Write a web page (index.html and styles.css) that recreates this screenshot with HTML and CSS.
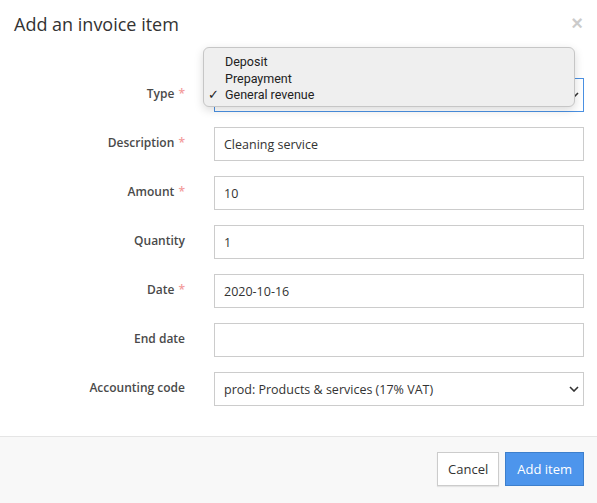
FILE: index.html
```html
<!DOCTYPE html>
<html lang="en">
<head>
    <meta charset="UTF-8">
    <meta name="viewport" content="width=device-width, initial-scale=1.0">
    <title>Add an invoice item</title>
    <link rel="stylesheet" href="styles.css">
</head>
<body>
    <div class="modal">
        <div class="modal-header">
            <h4 class="modal-title">Add an invoice item</h4>
            <button class="close" type="button">&times;</button>
        </div>

        <form class="modal-body">
            <div class="form-row">
                <label for="item-type">Type <span class="req">*</span></label>
                <div class="field">
                    <select id="item-type" class="form-control focused">
                        <option>Deposit</option>
                        <option>Prepayment</option>
                        <option selected>General revenue</option>
                    </select>
                    <ul class="select-menu">
                        <li>Deposit</li>
                        <li>Prepayment</li>
                        <li class="checked">General revenue</li>
                    </ul>
                </div>
            </div>
            <div class="form-row">
                <label for="item-description">Description <span class="req">*</span></label>
                <div class="field">
                    <input type="text" id="item-description" class="form-control" value="Cleaning service">
                </div>
            </div>
            <div class="form-row">
                <label for="item-amount">Amount <span class="req">*</span></label>
                <div class="field">
                    <input type="text" id="item-amount" class="form-control" value="10">
                </div>
            </div>
            <div class="form-row">
                <label for="item-quantity">Quantity</label>
                <div class="field">
                    <input type="text" id="item-quantity" class="form-control" value="1">
                </div>
            </div>
            <div class="form-row">
                <label for="item-date">Date <span class="req">*</span></label>
                <div class="field">
                    <input type="text" id="item-date" class="form-control" value="2020-10-16">
                </div>
            </div>
            <div class="form-row">
                <label for="item-end-date">End date</label>
                <div class="field">
                    <input type="text" id="item-end-date" class="form-control" value="">
                </div>
            </div>
            <div class="form-row">
                <label for="item-code">Accounting code</label>
                <div class="field">
                    <select id="item-code" class="form-control">
                        <option>prod: Products &amp; services (17% VAT)</option>
                    </select>
                </div>
            </div>
        </form>

        <div class="modal-footer">
            <button type="button" class="btn btn-default">Cancel</button>
            <button type="button" class="btn btn-primary">Add item</button>
        </div>
    </div>
</body>
</html>
```

FILE: styles.css
```css
body {
    margin: 0;
    font-family: "Open Sans", Arial, sans-serif;
    color: #333;
    background-color: #fff;
}
.modal {
    width: 597px;
    height: 503px;
    display: flex;
    flex-direction: column;
}
.modal-header {
    display: flex;
    justify-content: space-between;
    align-items: flex-start;
    padding: 12px 14px 0 14px;
    height: 51px;
}
.modal-title {
    margin: 0;
    font-size: 18px;
    font-weight: 400;
    line-height: 25px;
    color: #333;
}
.close {
    background: none;
    border: none;
    padding: 0;
    margin-top: 1px;
    font-family: Arial, sans-serif;
    font-size: 20px;
    font-weight: bold;
    line-height: 20px;
    color: #000;
    opacity: 0.2;
    cursor: pointer;
}
.modal-body {
    margin: 0;
    padding: 15px 13px 30px 0;
    display: flex;
    flex-direction: column;
    gap: 15px;
}
.form-row {
    display: grid;
    grid-template-columns: 185px 1fr;
    column-gap: 29px;
    align-items: center;
}
.form-row label {
    text-align: right;
    font-size: 12px;
    font-weight: 600;
    color: #4a4a4a;
    margin-top: -3px;
}
.req {
    color: #f39a9a;
    margin-left: 1px;
}
.field {
    position: relative;
}
.form-control {
    display: block;
    width: 100%;
    height: 34px;
    box-sizing: border-box;
    padding: 0 9px;
    border: 1px solid #ccc;
    border-radius: 0;
    font-family: "Open Sans", Arial, sans-serif;
    font-size: 12.5px;
    color: #333;
    background-color: #fff;
    outline: none;
}
select.form-control {
    appearance: none;
    -webkit-appearance: none;
    background-image: url("data:image/svg+xml;utf8,<svg xmlns='http://www.w3.org/2000/svg' width='10' height='6' viewBox='0 0 10 6'><path d='M1 1l4 4 4-4' fill='none' stroke='%23333' stroke-width='1.6'/></svg>");
    background-repeat: no-repeat;
    background-position: right 4px center;
    padding-right: 24px;
}
.form-control.focused {
    border-color: #4a90e2;
}
.select-menu {
    position: absolute;
    left: -11px;
    top: -31px;
    width: 372px;
    height: 60px;
    box-sizing: border-box;
    margin: 0;
    padding: 6px 0 0 0;
    list-style: none;
    background-color: #efefef;
    border: 1px solid #c6c6c6;
    border-radius: 6px;
    box-shadow: 0 3px 10px rgba(0, 0, 0, 0.15);
    font-family: Roboto, "Liberation Sans", sans-serif;
    font-size: 12.5px;
    color: #222;
}
.select-menu li {
    position: relative;
    height: 16.5px;
    line-height: 16px;
    padding-left: 21px;
}
.select-menu li.checked::before {
    content: "\2713";
    position: absolute;
    left: 4px;
    top: 0;
    font-family: "DejaVu Sans", sans-serif;
    font-size: 13px;
    font-weight: 300;
}
.modal-footer {
    flex: 1;
    border-top: 1px solid #e5e5e5;
    background-color: #f8f8f8;
    padding: 15px 13px 0 0;
    display: flex;
    justify-content: flex-end;
    align-items: flex-start;
    gap: 6px;
}
.btn {
    height: 34px;
    box-sizing: border-box;
    padding: 0 10px;
    border: 1px solid #ccc;
    border-radius: 0;
    font-family: "Open Sans", Arial, sans-serif;
    font-size: 13px;
    cursor: pointer;
}
.btn-default {
    background-color: #fff;
    color: #333;
    box-shadow: 0 1px 1px rgba(0, 0, 0, 0.08);
}
.btn-primary {
    background-color: #4d95ec;
    border-color: #3d7fcc;
    color: #fff;
    padding: 0 11px;
}
```
